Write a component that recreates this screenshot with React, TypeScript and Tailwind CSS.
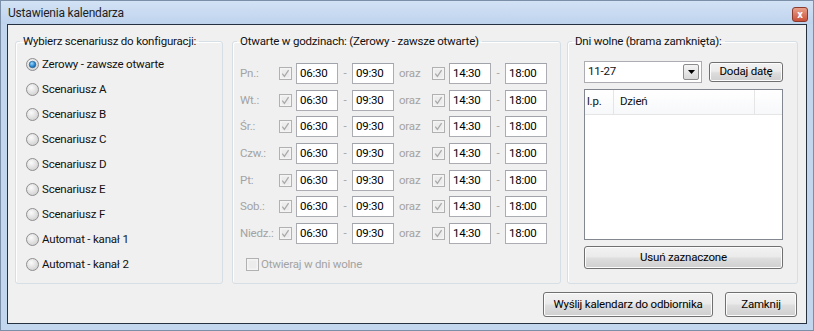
import React from "react";

const days = ["Pn.:", "Wt.:", "Śr.:", "Czw.:", "Pt:", "Sob.:", "Niedz.:"];

const scenarios = [
  "Zerowy - zawsze otwarte",
  "Scenariusz A",
  "Scenariusz B",
  "Scenariusz C",
  "Scenariusz D",
  "Scenariusz E",
  "Scenariusz F",
  "Automat - kanał 1",
  "Automat - kanał 2",
];

function Radio({ checked }: { checked?: boolean }) {
  return (
    <svg width="13" height="13" viewBox="0 0 13 13" className="shrink-0">
      <defs>
        <radialGradient id="rbg" cx="0.4" cy="0.35" r="0.7">
          <stop offset="0" stopColor="#fbfbfb" />
          <stop offset="1" stopColor="#cfcfcf" />
        </radialGradient>
        <radialGradient id="rdot" cx="0.4" cy="0.35" r="0.7">
          <stop offset="0" stopColor="#9fd8fb" />
          <stop offset="0.6" stopColor="#2f8ad2" />
          <stop offset="1" stopColor="#145d9c" />
        </radialGradient>
      </defs>
      <circle cx="6.5" cy="6.5" r="6" fill="url(#rbg)" stroke="#8f8f8f" />
      {checked && <circle cx="6.5" cy="6.5" r="3.3" fill="url(#rdot)" stroke="#1d5a8c" strokeWidth="0.6" />}
    </svg>
  );
}

function Check({ checked }: { checked?: boolean }) {
  return (
    <svg width="13" height="13" viewBox="0 0 13 13" className="shrink-0">
      <rect x="0.5" y="0.5" width="12" height="12" fill="#f4f4f4" stroke="#b1b1b1" />
      <rect x="2.5" y="2.5" width="8" height="8" fill="#ececec" />
      {checked && (
        <path d="M3.3 6.6 L5.4 9.4 L9.6 3.2" fill="none" stroke="#a9a9a9" strokeWidth="1.2" />
      )}
    </svg>
  );
}

function Button({ label, className }: { label: string; className: string }) {
  return (
    <div
      className={`flex items-center justify-center whitespace-nowrap rounded-[3px] border border-[#707070] bg-[linear-gradient(#f2f2f2,#ebebeb_45%,#dddddd_55%,#cfcfcf)] shadow-[inset_0_0_0_1px_#fcfcfc] text-black ${className}`}
    >
      {label}
    </div>
  );
}

function TimeBox({ value }: { value: string }) {
  return (
    <div className="w-[42px] h-[21px] shrink-0 border border-[#abadb3] border-t-[#a0a3aa] bg-white pl-[3px] leading-[19px] text-black">
      {value}
    </div>
  );
}

export default function App() {
  return (
    <div className="w-[814px] h-[331px] flex flex-col bg-[#c2d6ee] border border-[#7b8fa8] font-['Roboto',sans-serif] text-[11.5px] tracking-[-0.2px] text-[#111] whitespace-nowrap">
      <div className="h-[23px] shrink-0 flex items-center justify-between pl-[7px] pr-[5px] bg-[linear-gradient(#d3e2f5,#bed3ed)]">
        <span className="text-[#1e1e1e] text-[12px] leading-none">Ustawienia kalendarza</span>
        <div className="w-[16px] h-[15px] mt-[4px] rounded-[3px] border border-[#8a3b2e] bg-[linear-gradient(#e9a08a,#c9503a)] flex items-center justify-center text-white text-[11px] font-bold leading-none">
          x
        </div>
      </div>

      <div className="flex-1 mx-[6px] mb-[6px] border border-[#25313f] bg-[#f0f0f0] flex flex-col">
        <div className="flex mt-[8px] ml-[7px]">
          <fieldset className="w-[208px] h-[251px] border border-[#d5dfe5] rounded-[3px] shadow-[inset_1px_1px_0_#ffffff]">
            <legend className="ml-[4px] px-[3px] leading-[16px]">Wybierz scenariusz do konfiguracji:</legend>
            <div className="flex flex-col pl-[10px] pt-[3px]">
              {scenarios.map((s, i) => (
                <div key={s} className="h-[25px] flex items-center gap-[3px]">
                  <Radio checked={i === 0} />
                  <span>{s}</span>
                </div>
              ))}
            </div>
          </fieldset>

          <fieldset className="ml-[9px] w-[329px] h-[251px] border border-[#d5dfe5] rounded-[3px] shadow-[inset_1px_1px_0_#ffffff]">
            <legend className="ml-[4px] px-[3px] leading-[16px]">Otwarte w godzinach: (Zerowy - zawsze otwarte)</legend>
            <div className="flex flex-col gap-[5.67px] pl-[7px] pt-[14px]">
              {days.map((d) => (
                <div key={d} className="flex items-center h-[21px]">
                  <span className="w-[39px] text-[#a3a3a3]">{d}</span>
                  <Check checked />
                  <div className="w-[4px]" />
                  <TimeBox value="06:30" />
                  <span className="w-[14px] text-center text-[#a3a3a3]">-</span>
                  <TimeBox value="09:30" />
                  <span className="w-[38px] pl-[5px] text-[#a3a3a3]">oraz</span>
                  <Check checked />
                  <div className="w-[4px]" />
                  <TimeBox value="14:30" />
                  <span className="w-[14px] text-center text-[#a3a3a3]">-</span>
                  <TimeBox value="18:00" />
                </div>
              ))}
              <div className="flex items-center gap-[2px] pl-[6px] mt-[6px]">
                <Check />
                <span className="text-[#a3a3a3]">Otwieraj w dni wolne</span>
              </div>
            </div>
          </fieldset>

          <fieldset className="ml-[6px] w-[231px] h-[251px] border border-[#d5dfe5] rounded-[3px] shadow-[inset_1px_1px_0_#ffffff]">
            <legend className="ml-[4px] px-[3px] leading-[16px]">Dni wolne (brama zamknięta):</legend>
            <div className="flex flex-col pl-[16px] pt-[12px]">
              <div className="flex items-center">
                <div className="w-[118px] h-[22px] border border-[#abadb3] bg-white flex items-center justify-between pl-[3px] pr-[2px]">
                  <span>11-27</span>
                  <div className="w-[16px] h-[16px] border border-[#8c8c8c] rounded-[2px] bg-[linear-gradient(#f5f5f5,#d8d8d8)] flex items-center justify-center">
                    <svg width="7" height="4" viewBox="0 0 7 4">
                      <path d="M0 0 H7 L3.5 4 Z" fill="#000" />
                    </svg>
                  </div>
                </div>
                <Button label="Dodaj datę" className="ml-[7px] w-[74px] h-[20px]" />
              </div>
              <div className="mt-[6px] w-[199px] h-[151px] border border-[#828790] bg-white flex flex-col">
                <div className="h-[25px] flex border-b border-[#e5e5e5] bg-[linear-gradient(#ffffff,#f7f8fa)]">
                  <div className="w-[29px] pl-[2px] flex items-center border-r border-[#e5e5e5]">l.p.</div>
                  <div className="w-[141px] pl-[6px] flex items-center border-r border-[#e5e5e5]">Dzień</div>
                  <div className="flex-1" />
                </div>
              </div>
              <Button label="Usuń zaznaczone" className="mt-[6px] w-[199px] h-[23px]" />
            </div>
          </fieldset>
        </div>

        <div className="flex justify-end mt-[8px] mr-[9px] gap-[12px]">
          <Button label="Wyślij kalendarz do odbiornika" className="w-[170px] h-[25px]" />
          <Button label="Zamknij" className="w-[72px] h-[25px]" />
        </div>
      </div>
    </div>
  );
}
